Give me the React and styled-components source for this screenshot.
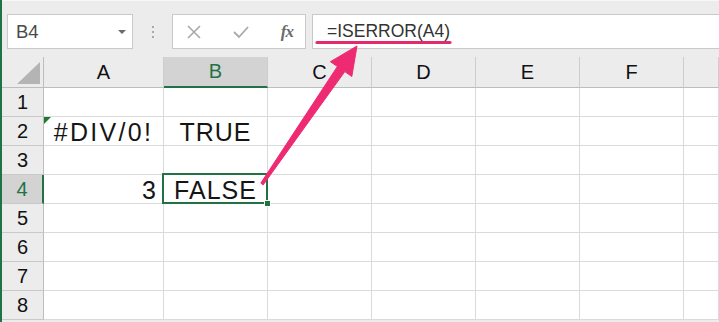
import React from "react";
import styled, { createGlobalStyle, css } from "styled-components";

const GREEN = "#217346";

const GlobalStyle = createGlobalStyle`
  html, body { margin: 0; padding: 0; overflow: hidden; background: #fff; }
  * { box-sizing: border-box; }
`;

const Frame = styled.div`
  position: relative;
  width: 719px;
  height: 322px;
  overflow: hidden;
  background: #ececec;
  border-left: 2px solid ${GREEN};
  font-family: "Liberation Sans", Arial, sans-serif;
`;

const Toolbar = styled.div`
  display: flex;
  align-items: flex-start;
  height: 57px;
  padding-top: 13px;
  border-top: 1px solid #f7f7f7;
`;

const Field = styled.div`
  height: 35px;
  background: #fff;
  border: 1px solid #c9c9c9;
  display: flex;
  align-items: center;
`;

const NameBox = styled(Field)`
  margin-left: 5px;
  width: 126px;
  padding: 0 6px 0 8px;
  justify-content: space-between;
  font-size: 18.5px;
  color: #4a4a4a;
`;

const Caret = styled.span`
  width: 0;
  height: 0;
  border-left: 4px solid transparent;
  border-right: 4px solid transparent;
  border-top: 4px solid #6a6a6a;
`;

const Grip = styled.div`
  width: 39px;
  height: 35px;
  display: flex;
  flex-direction: column;
  align-items: center;
  justify-content: center;
  gap: 3px;
`;

const Dot = styled.span`
  width: 2px;
  height: 2px;
  background: #a8a8a8;
`;

const FxButtons = styled(Field)`
  width: 134px;
  padding: 0 12px 0 14px;
  justify-content: space-between;
`;

const FxLabel = styled.span`
  font-family: "Liberation Serif", "Times New Roman", serif;
  font-style: italic;
  font-weight: bold;
  font-size: 17px;
  color: #6b6b6b;
  letter-spacing: -1px;
`;

const FormulaBox = styled(Field)`
  flex: 1;
  margin-left: 6px;
  border-right: none;
  padding-left: 14px;
  font-size: 17.5px;
  color: #333;
`;

const Sheet = styled.div`
  display: grid;
  grid-template-columns: 42px 120px repeat(5, 104px) 1fr;
  grid-template-rows: 31px;
  grid-auto-rows: 29px;
  background: #fff;
`;

const HeadCell = styled.div`
  display: flex;
  align-items: center;
  justify-content: center;
  background: ${(p) => (p.$active ? "#d3d3d3" : "#ececec")};
  color: ${(p) => (p.$active ? GREEN : "#111")};
  border-right: 1px solid #cdcdcd;
  border-bottom: ${(p) => (p.$active ? `2px solid ${GREEN}` : "1px solid #bdbdbd")};
  font-size: 20px;
`;

const Corner = styled.div`
  display: flex;
  align-items: flex-end;
  justify-content: flex-end;
  padding: 0 3px 3px 0;
  background: #ececec;
  border-right: 1px solid #bdbdbd;
  border-bottom: 1px solid #bdbdbd;
`;

const CornerTri = styled.span`
  width: 23px;
  height: 22px;
  background: #b4b4b4;
  clip-path: polygon(100% 0, 100% 100%, 0 100%);
`;

const RowHead = styled.div`
  display: flex;
  align-items: center;
  justify-content: center;
  background: ${(p) => (p.$active ? "#d3d3d3" : "#ececec")};
  color: ${(p) => (p.$active ? GREEN : "#111")};
  border-right: ${(p) => (p.$active ? `2px solid ${GREEN}` : "1px solid #bdbdbd")};
  border-bottom: 1px solid #c9c9c9;
  font-size: 20px;
  padding-top: 1px;
`;

const Cell = styled.div`
  position: relative;
  display: flex;
  align-items: center;
  justify-content: ${(p) => p.$align || "center"};
  padding: 2px 6px 0;
  border-right: 1px solid #dadada;
  border-bottom: 1px solid #dadada;
  font-size: 25px;
  letter-spacing: ${(p) => p.$spacing || "1px"};
  color: #151515;
  white-space: nowrap;
  ${(p) =>
    p.$error &&
    css`
      &::before {
        content: "";
        position: absolute;
        top: 0;
        left: 0;
        border-top: 7px solid #1d7a35;
        border-right: 7px solid transparent;
      }
    `}
  ${(p) =>
    p.$selected &&
    css`
      &::after {
        content: "";
        position: absolute;
        top: -2px;
        left: -2px;
        right: -1px;
        bottom: -1px;
        border: 2px solid ${GREEN};
        pointer-events: none;
      }
    `}
`;

const FillHandle = styled.span`
  position: absolute;
  right: -4px;
  bottom: -4px;
  width: 7px;
  height: 7px;
  background: ${GREEN};
  border: 1px solid #fff;
  z-index: 2;
`;

const Overlay = styled.svg`
  position: absolute;
  left: -2px;
  top: 0;
  pointer-events: none;
`;

const COLS = ["A", "B", "C", "D", "E", "F", ""];

const DATA = {
  2: { A: { text: "#DIV/0!", error: true, spacing: "2.3px" }, B: { text: "TRUE" } },
  4: { A: { text: "3", align: "flex-end" }, B: { text: "FALSE", selected: true } },
};

function XIcon() {
  return (
    <svg width="14" height="14" viewBox="0 0 14 14">
      <path d="M1 1 L13 13 M13 1 L1 13" stroke="#a9a9a9" strokeWidth="1.6" fill="none" />
    </svg>
  );
}

function CheckIcon() {
  return (
    <svg width="16" height="14" viewBox="0 0 16 14">
      <path d="M1 7 L6 12 L15 2" stroke="#a9a9a9" strokeWidth="1.8" fill="none" />
    </svg>
  );
}

export default function App() {
  const rows = [1, 2, 3, 4, 5, 6, 7, 8];
  return (
    <>
      <GlobalStyle />
      <Frame>
        <Toolbar>
          <NameBox>
            <span>B4</span>
            <Caret />
          </NameBox>
          <Grip>
            <Dot />
            <Dot />
            <Dot />
          </Grip>
          <FxButtons>
            <XIcon />
            <CheckIcon />
            <FxLabel>fx</FxLabel>
          </FxButtons>
          <FormulaBox>=ISERROR(A4)</FormulaBox>
        </Toolbar>
        <Sheet>
          <Corner>
            <CornerTri />
          </Corner>
          {COLS.map((c, i) => (
            <HeadCell key={"h" + i} $active={c === "B"}>
              {c}
            </HeadCell>
          ))}
          {rows.map((r) => (
            <React.Fragment key={r}>
              <RowHead $active={r === 4}>{r}</RowHead>
              {COLS.map((c, i) => {
                const d = (DATA[r] && DATA[r][c]) || {};
                return (
                  <Cell
                    key={r + "-" + i}
                    $align={d.align}
                    $error={d.error}
                    $selected={d.selected}
                    $spacing={d.spacing}
                  >
                    {d.text}
                    {d.selected && <FillHandle />}
                  </Cell>
                );
              })}
            </React.Fragment>
          ))}
        </Sheet>
        <Overlay width="719" height="322" viewBox="0 0 719 322">
          <line x1="317" y1="42.5" x2="450" y2="42.5" stroke="#e32a6f" strokeWidth="3.2" strokeLinecap="round" />
          <polygon
            points="260.8,183.1 337.4,66.5 330.4,61.7 357,46 351.8,76.5 344.8,71.6 263.2,184.9"
            fill="#ee2b72"
            stroke="#ee2b72"
            strokeWidth="1"
            strokeLinejoin="round"
          />
        </Overlay>
      </Frame>
    </>
  );
}
